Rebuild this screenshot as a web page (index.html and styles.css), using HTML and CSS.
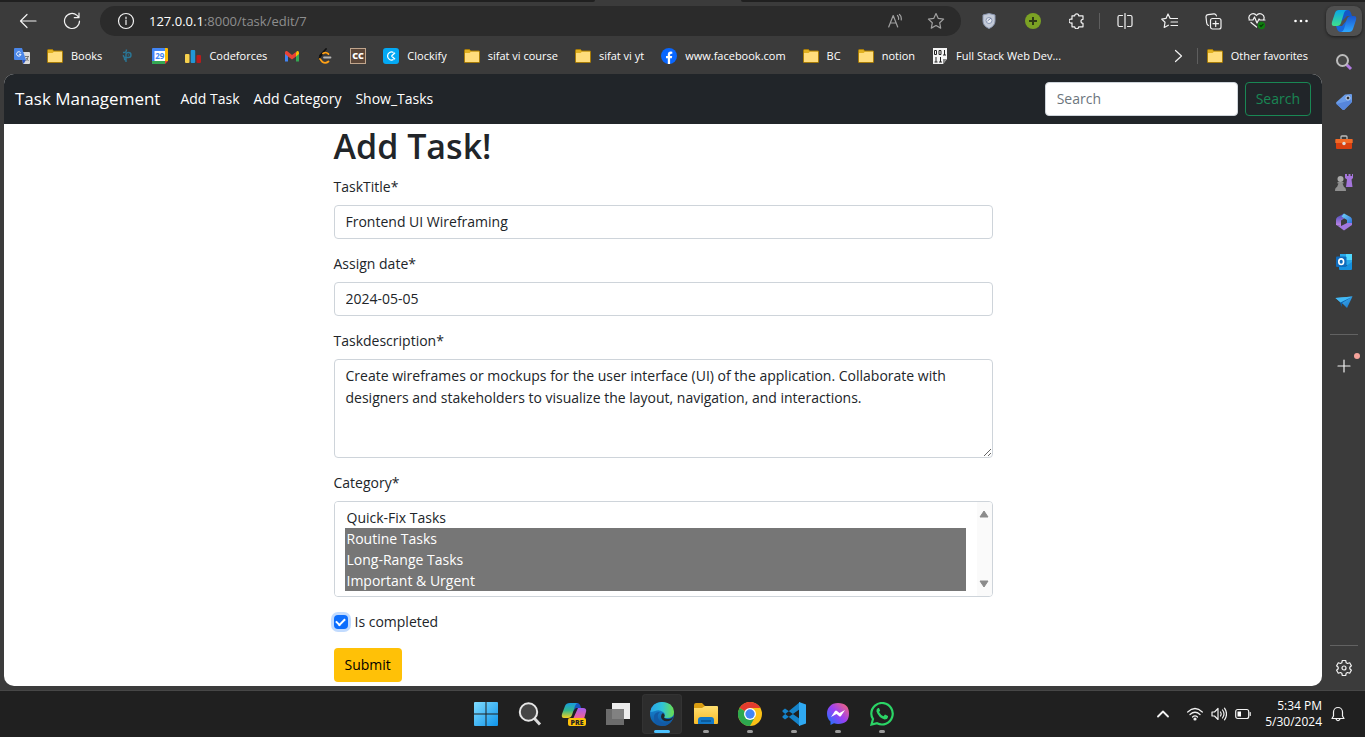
FILE: index.html
```html
<!DOCTYPE html>
<html lang="en">
<head>
<meta charset="utf-8">
<meta name="viewport" content="width=device-width, initial-scale=1">
<title>Edit task</title>
<link rel="stylesheet" href="styles.css">
</head>
<body>
<svg class="defs" width="0" height="0" aria-hidden="true">
  <defs>
    <symbol id="folder" viewBox="0 0 16 16">
      <path d="M.5 2.500q0-1 1-1h4l1.200 1.500h8.300q.5 0 .5.500v10.500q0 .5-.5.500h-14q-.5 0-.5-.5z" fill="#e0b020" stroke="#a87c08"/>
      <path d="M1 5h4.500l1.500-1.200h8v10.200h-14z" fill="#ffdd7c"/>
    </symbol>
    <linearGradient id="cp1" x1="0" y1="0" x2="0" y2="1"><stop offset="0" stop-color="#0aa5e8"/><stop offset="1" stop-color="#3fe08a"/></linearGradient>
    <linearGradient id="cp2" x1="0" y1="0" x2="0" y2="1"><stop offset="0" stop-color="#1a55d0"/><stop offset="1" stop-color="#2da8ff"/></linearGradient>
    <linearGradient id="pr1" x1="0" y1="0" x2="0" y2="1"><stop offset="0" stop-color="#169be0"/><stop offset=".5" stop-color="#35b88a"/><stop offset="1" stop-color="#f5d020"/></linearGradient>
    <linearGradient id="pr2" x1="0" y1="0" x2="0" y2="1"><stop offset="0" stop-color="#a45cf0"/><stop offset="1" stop-color="#f8628c"/></linearGradient>
    <linearGradient id="win" x1="0" y1="0" x2="1" y2="1"><stop offset="0" stop-color="#7fdcff"/><stop offset="1" stop-color="#0f94ea"/></linearGradient>
    <linearGradient id="edge1" x1="0" y1="0" x2="1" y2="0"><stop offset="0" stop-color="#2aa5e8"/><stop offset=".5" stop-color="#2fc3d8"/><stop offset="1" stop-color="#6be04a"/></linearGradient>
    <linearGradient id="edge2" x1="0" y1="0" x2="0" y2="1"><stop offset="0" stop-color="#1b8fdc"/><stop offset="1" stop-color="#0c59a4"/></linearGradient>
    <linearGradient id="msg" x1="0" y1="1" x2="1" y2="0"><stop offset="0" stop-color="#0a7cff"/><stop offset=".5" stop-color="#9a40f5"/><stop offset="1" stop-color="#ff6a6a"/></linearGradient>
    <linearGradient id="tg" x1="0" y1="0" x2="1" y2="1"><stop offset="0" stop-color="#52c4f8"/><stop offset="1" stop-color="#1170c8"/></linearGradient>
    <linearGradient id="m1" x1="0" y1="0" x2="1" y2="1"><stop offset="0" stop-color="#70d8f8"/><stop offset="1" stop-color="#2a68d8"/></linearGradient>
    <linearGradient id="m2" x1="0" y1="0" x2="0" y2="1"><stop offset="0" stop-color="#4248b8"/><stop offset="1" stop-color="#c488e8"/></linearGradient>
    <linearGradient id="fold" x1="0" y1="0" x2="0" y2="1"><stop offset="0" stop-color="#ffdf70"/><stop offset="1" stop-color="#f8ba28"/></linearGradient>
  </defs>
</svg>

<div class="window">
  <div class="browser">
    <div class="tabstrip"><span class="tab-edge tab-edge-left"></span><span class="tab-active"></span><span class="tab-edge tab-edge-right"></span></div>

    <header class="toolbar">
      <button class="nav-btn" aria-label="Back"><svg width="18" height="16" viewBox="0 0 18 16" class="line"><path d="M17 8H1.500M8 1.500 1.500 8 8 14.500"/></svg></button>
      <button class="nav-btn" aria-label="Refresh"><svg width="18" height="18" viewBox="0 0 18 18" class="line"><path d="M16.500 9A7.500 7.500 0 1 1 14 3.400L16 5.500M16 1v4.700h-4.700"/></svg></button>
      <div class="address">
        <svg width="18" height="18" viewBox="0 0 18 18" class="line"><circle cx="9" cy="9" r="7.500"/><path d="M9 8v4.500M9 5v1.400"/></svg>
        <span class="url"><b>127.0.0.1</b>:8000/task/edit/7</span>
        <button class="pill-btn" aria-label="Read aloud"><svg width="16" height="16" viewBox="0 0 16 16" class="line dim"><path d="M.700 14 5.200 2.500 9.700 14M2.500 10h5.500M9.500 2.500q1.500 1.500 1 4M11.500 1.500q2.300 2 1.700 5.500"/></svg></button>
        <button class="pill-btn" aria-label="Add to favorites"><svg width="18" height="18" viewBox="0 0 18 18" class="line dim"><path d="m9 1.500 2.300 4.900 5.300.7-3.900 3.700 1 5.300L9 13.500l-4.700 2.600 1-5.300L1.400 7.100l5.300-.7z"/></svg></button>
      </div>
      <button class="tool" aria-label="Shield"><svg width="14" height="16" viewBox="0 0 14 16"><path d="M7 .500 13 2v6q0 5-6 7.500Q1 13 1 8V2z" fill="#c3cad8" stroke="#8d99b2"/><circle cx="7" cy="7.500" r="3" fill="#e8ebf2" stroke="#8997b4"/><path d="m5.500 8 3.500-3" stroke="#7380a0"/></svg></button>
      <button class="tool" aria-label="Add"><svg width="16" height="16" viewBox="0 0 16 16"><circle cx="8" cy="8" r="8" fill="#7ba224"/><path d="M8 4v8M4 8h8" stroke="#2e3a16" stroke-width="2"/></svg></button>
      <button class="tool" aria-label="Extensions"><svg width="16" height="16" viewBox="0 0 16 16" class="line"><path d="M3 2.800h2.700a2 2 0 0 1 4 0H14v3.500a2 2 0 0 0 0 4v3.500H9.700a2 2 0 0 1-4 0H3v-4a2 2 0 1 1 0-3.500z"/></svg></button>
      <span class="tool-sep"></span>
      <button class="tool" aria-label="Split screen"><svg width="16" height="16" viewBox="0 0 16 16" class="line"><path d="M5.500 2.500H2.500q-1.500 0-1.500 1.500v8q0 1.500 1.500 1.500h3M10.500 2.500h3q1.500 0 1.500 1.500v8q0 1.500-1.500 1.500h-3M8 .500v15"/></svg></button>
      <button class="tool" aria-label="Favorites"><svg width="17" height="16" viewBox="0 0 17 16" class="line"><path d="M11 5.500H9.200L7 1 5 5.400l-4.300.7L4 9.300l-.8 5.200 4.200-2.300M10 5.500h6.500M10 9h6.500M10 12.500h6.500"/></svg></button>
      <button class="tool" aria-label="Collections"><svg width="17" height="17" viewBox="0 0 17 17" class="line"><rect x="5.500" y="5.500" width="10.500" height="10.500" rx="2"/><path d="M10.700 8v5.500M8 10.700h5.500M3.500 12.500Q2 12 1.700 10L1 4Q.800 2 3 1.700l6-.9q2-.2 2.500 2.200"/></svg></button>
      <button class="tool" aria-label="Browser essentials"><svg width="18" height="18" viewBox="0 0 18 18" class="line"><path d="M1.500 8q-2-4 2-6 3-1.200 5 1.500 2-2.700 5-1.500 4 2 2 6M1 8h4l1.500-3L9 11l2-4 1 1h5M3 10.500 8.500 15"/><circle cx="13.500" cy="13.500" r="3.700" fill="#107c10" stroke="none"/><path d="m12 13.500 1 1 2-2.200" stroke="#063c06"/></svg></button>
      <button class="tool" aria-label="Settings and more"><svg width="16" height="4" viewBox="0 0 16 4" fill="#fff"><circle cx="2.500" cy="2" r="1.300"/><circle cx="8" cy="2" r="1.300"/><circle cx="13.500" cy="2" r="1.300"/></svg></button>
    </header>

    <nav class="bookmarks" aria-label="Favorites bar">
      <a href="#" aria-label="Translate"><svg width="16" height="16" viewBox="0 0 16 16"><path d="M7 4h8q1 0 1 1v10q0 1-1 1H9z" fill="#dcdcdc"/><path d="M1 0h7l4 12H1q-1 0-1-1V1q0-1 1-1z" fill="#4a86e8"/><path d="m8 12 4 0-2.500 4z" fill="#2a56c6"/><path d="M6.500 4.500A2.200 2.200 0 1 0 7 6.300H5" fill="none" stroke="#fff"/><path d="M11 8.500h4M11.500 13q2.500-1.500 2.500-4.500M12 10l2.500 3" fill="none" stroke="#777"/></svg></a>
      <a href="#"><svg width="16" height="16"><use href="#folder"/></svg>Books</a>
      <a href="#" aria-label="Programming"><svg width="16" height="16" viewBox="0 0 16 16" fill="none" stroke="#2a7797" stroke-width="1.400"><path d="M7 14V6.500q0-2 2.500-2T12 7t-2.500 2.500H6Q4 9 4.500 7M7 12q-2 0-1.500-2M4 4.500q3.500.5 3.500-3M9.500 6.500v1"/></svg></a>
      <a href="#" aria-label="Calendar"><svg width="16" height="16" viewBox="0 0 16 16"><path d="M0 1q0-1 1-1h12v3H3v13H1q-1 0-1-1z" fill="#4285f4"/><path d="M13 0h2q1 0 1 1v12h-3z" fill="#fbbc04"/><path d="M0 13h13v3H1q-1 0-1-1z" fill="#34a853"/><path d="M13 13h3l-3 3z" fill="#ea4335"/><rect x="2.500" y="3" width="10.500" height="10" fill="#fff"/><text x="7.800" y="11" text-anchor="middle" font-size="8" font-weight="700" fill="#4285f4">29</text></svg></a>
      <a href="#"><svg width="16" height="16" viewBox="0 0 16 16"><rect y="6" width="4.500" height="9" rx="1" fill="#f6d04d"/><rect x="5.700" y="2" width="4.500" height="13" rx="1" fill="#2196d6"/><rect x="11.500" y="7" width="4.500" height="8" rx="1" fill="#b71c1c"/></svg>Codeforces</a>
      <a href="#" aria-label="Gmail"><svg width="16" height="16" viewBox="0 0 16 16"><path d="M1 4v9.500h3V7z" fill="#4285f4"/><path d="M15 4v9.500h-3V7z" fill="#34a853"/><path d="M12 4.500 13 3q2-.5 2 1.500v1.500l-3 2.500z" fill="#fbbc04"/><path d="M1 6V4.500Q1 2.500 3 3l5 4 4-3v4.500l-4 3-4-3z" fill="#ea4335"/></svg></a>
      <a href="#" aria-label="LeetCode"><svg width="16" height="16" viewBox="0 0 16 16" fill="none" stroke-width="1.800" stroke-linecap="round"><path d="M9 1 3 7.500" stroke="#111"/><path d="M11.500 6Q8.500 3.500 6 5.500L3 8.500q-1 1.500 0 3" stroke="#111"/><path d="m3 11 2.500 3q3 2 6-.5" stroke="#ffa116"/><path d="M6 5.500q3-2 5.500.5" stroke="#ffa116"/><path d="M7 9.500h6.500" stroke="#b3b3b3"/></svg></a>
      <a href="#" aria-label="CodeChef"><svg width="16" height="16" viewBox="0 0 16 16"><rect x=".500" y=".500" width="15" height="15" fill="#5b4638" stroke="#c0a58c"/><text x="8" y="11" text-anchor="middle" font-size="9" font-weight="800" fill="#fff">CC</text></svg></a>
      <a href="#"><svg width="16" height="16" viewBox="0 0 16 16"><rect width="16" height="16" rx="3" fill="#03a9f4"/><path d="M10.500 4.500A4 4 0 1 0 10.500 11.500M8.500 8 12 4.700M8.500 8l3.500 3.300" fill="none" stroke="#fff" stroke-width="1.300"/></svg>Clockify</a>
      <a href="#"><svg width="16" height="16"><use href="#folder"/></svg>sifat vi course</a>
      <a href="#"><svg width="16" height="16"><use href="#folder"/></svg>sifat vi yt</a>
      <a href="#"><svg width="16" height="16" viewBox="0 0 16 16"><circle cx="8" cy="8" r="8" fill="#0866ff"/><path d="M6.800 16V10.300H5V8h1.800V6.500q0-3 3-3 1 0 1.500.2v2h-1q-1.200 0-1.200 1.200V8h2.100l-.4 2.300H9.100V16z" fill="#fff"/></svg>www.facebook.com</a>
      <a href="#"><svg width="16" height="16"><use href="#folder"/></svg>BC</a>
      <a href="#"><svg width="16" height="16"><use href="#folder"/></svg>notion</a>
      <a href="#"><svg width="16" height="16" viewBox="0 0 16 16"><path d="M1 0h14v11l-4 5H1z" fill="#f4f4f4"/><path d="M15 11h-4v5z" fill="#888"/><path d="M2.500 2.500h2v4h-2zM7 2.500h2v4H7zM12.500 2v5M11 7h3M4 9v5M2.500 14h3M8.500 9v5M7 14h3" fill="none" stroke="#222"/></svg>Full Stack Web Dev...</a>
      <button class="overflow" aria-label="More favorites"><svg width="10" height="14" viewBox="0 0 10 14" class="line"><path d="m1.500 1.500 6 5.500-6 5.500"/></svg></button>
      <a href="#" class="other"><svg width="16" height="16"><use href="#folder"/></svg>Other favorites</a>
    </nav>

    <div class="page">
      <nav class="navbar">
        <a href="#" class="brand">Task Management</a>
        <a href="#" class="nav-link">Add Task</a>
        <a href="#" class="nav-link">Add Category</a>
        <a href="#" class="nav-link">Show_Tasks</a>
        <form class="search" role="search">
          <input class="control" type="search" placeholder="Search" aria-label="Search">
          <button class="btn btn-outline" type="button">Search</button>
        </form>
      </nav>
      <main class="content">
        <h1>Add Task!</h1>
        <form>
          <div class="field"><label for="title">TaskTitle*</label><input class="control" id="title" type="text" value="Frontend UI Wireframing"></div>
          <div class="field"><label for="date">Assign date*</label><input class="control" id="date" type="text" value="2024-05-05"></div>
          <div class="field"><label for="desc">Taskdescription*</label><textarea class="control area" id="desc">Create wireframes or mockups for the user interface (UI) of the application. Collaborate with designers and stakeholders to visualize the layout, navigation, and interactions.</textarea></div>
          <div class="field"><label for="cat">Category*</label>
            <div class="listbox">
              <select id="cat" multiple size="4">
                <option>Quick-Fix Tasks</option>
                <option selected>Routine Tasks</option>
                <option selected>Long-Range Tasks</option>
                <option selected>Important &amp; Urgent</option>
              </select>
              <div class="rail" aria-hidden="true">
                <svg width="10" height="8" viewBox="0 0 10 8"><path d="M5 1 9 7H1z" fill="#8b8b8b" stroke="#8b8b8b" stroke-linejoin="round"/></svg>
                <svg width="10" height="8" viewBox="0 0 10 8"><path d="M5 7 9 1H1z" fill="#8b8b8b" stroke="#8b8b8b" stroke-linejoin="round"/></svg>
              </div>
            </div>
          </div>
          <div class="check"><input type="checkbox" id="done" checked><label for="done">Is completed</label></div>
          <button class="btn btn-submit" type="button">Submit</button>
        </form>
      </main>
    </div>
  </div>

  <aside class="sidebar">
    <button class="copilot" aria-label="Copilot"><svg width="26" height="24" viewBox="0 0 26 24"><path d="M9 1h8q2 0 3 3l1 3h-5l-5 5z" fill="#1457c8"/><path d="M17 23H9q-2 0-3-3l-1-3h6l5-6z" fill="#1668dd"/><path d="M8 1h8q-2 0-3 3l-3 10q-1 3-4 3H3q-3 0-2-4L4 4q1-3 4-3z" fill="url(#cp1)"/><path d="M18 23h-8q2 0 3-3l3-10q1-3 4-3h3q3 0 2 4l-3 9q-1 3-4 3z" fill="url(#cp2)"/></svg></button>
    <button class="side" aria-label="Search"><svg width="18" height="18" viewBox="0 0 18 18" fill="none"><path d="m11 11 5 5" stroke="#b07be0" stroke-width="3"/><circle cx="7.500" cy="7.500" r="5.500" stroke="#bcbcbc" stroke-width="2" fill="#464646"/></svg></button>
    <button class="side" aria-label="Shopping"><svg width="18" height="18" viewBox="0 0 18 18"><path d="M10 1.500 16 1q1 0 1 1v7l-7.500 7.500q-1 1-2 0L1.500 11q-1-1 0-2z" fill="#6a9ce8"/><path d="m1.500 11 15-4v2.500l-7 7q-1 1-2 0z" fill="#5686dc"/><circle cx="13" cy="5" r="2" fill="#333" stroke="#c5d9fa"/></svg></button>
    <button class="side" aria-label="Tools"><svg width="18" height="18" viewBox="0 0 18 18"><path d="M6 6V4q0-1 1-1h4q1 0 1 1v2" fill="none" stroke="#bbb" stroke-width="1.300"/><path d="M1 6h16q.7 0 .7.700V10H.300V6.700Q.300 6 1 6z" fill="#f26a26"/><path d="M1 10h16v5q0 1-1 1H2q-1 0-1-1z" fill="#d94010"/><circle cx="9" cy="10.500" r="1.700" fill="#ddd"/></svg></button>
    <button class="side" aria-label="Games"><svg width="18" height="18" viewBox="0 0 18 18"><path d="M10 1h2v2h1.500V1h2v2H17V1h1v4l-1.500 1.500L17.500 14H11l1-7.500L10 5z" fill="#a575dc"/><circle cx="5.500" cy="6" r="3" fill="#aaa"/><path d="M2.500 9h6v1.500H7.500L9 14q2 .5 2 4H0q0-3.500 2-4l1.500-3.500h-1z" fill="#8f8f8f"/></svg></button>
    <button class="side" aria-label="Microsoft 365"><svg width="18" height="18" viewBox="0 0 18 18"><path d="M9 .500 2.500 4Q1 5 1 7v5l5 1V7.500L11.500 4z" fill="url(#m2)"/><path d="m9 .500 6.500 3.500Q17 5 17 7v5l-5-2V7L6.500 3.500z" fill="url(#m1)"/><path d="M1.500 12 6 13l6-3h5v2L9 17.500z" fill="#a178e0"/></svg></button>
    <button class="side" aria-label="Outlook"><svg width="18" height="18" viewBox="0 0 18 18"><rect x="5" y="1" width="12" height="11" fill="#28a8ea"/><path d="M11 1h6v6h-6z" fill="#50d9ff"/><path d="M4 9 11 13l6-4v7q0 1-1 1H5q-1 0-1-1z" fill="#1490df"/><rect x="1" y="3.500" width="10.500" height="10.500" rx="1" fill="#0f6cbd"/><ellipse cx="6.200" cy="8.700" rx="2.400" ry="2.800" fill="none" stroke="#fff" stroke-width="1.600"/></svg></button>
    <button class="side" aria-label="Drop"><svg width="18" height="18" viewBox="0 0 18 18"><path d="M.500 5 17.500 3.500 12 15 8 11z" fill="url(#tg)"/><path d="M17.500 3.500 7 10l-.5 4L5 9z" fill="#0a5fb0"/><path d="M.500 5 17.500 3.500 5.500 9.500z" fill="#42b9f5"/></svg></button>
    <span class="side-sep"></span>
    <button class="side side-add" aria-label="Customize"><svg width="14" height="14" viewBox="0 0 14 14" class="line"><path d="M7 1v12M1 7h12"/></svg><span class="dot"></span></button>
    <span class="side-sep side-end"></span>
    <button class="side settings" aria-label="Settings"><svg width="18" height="18" viewBox="0 0 18 18" class="line"><path d="M7.300 1.500h3.400l.5 2.300 1.300.7 2.200-.7 1.700 2.900-1.600 1.500v1.600l1.600 1.500-1.700 2.900-2.200-.7-1.300.7-.5 2.300H7.300l-.5-2.300-1.300-.7-2.200.7-1.700-2.900 1.600-1.500V8.200L1.600 6.700l1.700-2.900 2.200.7 1.300-.7z"/><circle cx="9" cy="9" r="2"/></svg></button>
  </aside>
</div>

<footer class="taskbar">
  <div class="apps">
    <button class="app" aria-label="Start"><svg width="24" height="24" viewBox="0 0 24 24" fill="url(#win)"><path d="M1 0h10.500v11.500H0V1q0-1 1-1zM12.500 0H23q1 0 1 1v10.500H12.500zM0 12.500h11.500V24H1q-1 0-1-1zM12.500 12.500H24V23q0 1-1 1H12.500z"/></svg></button>
    <button class="app" aria-label="Search"><svg width="24" height="24" viewBox="0 0 24 24"><path d="m16 16 6 6.500" stroke="#d9d9d9" stroke-width="3"/><circle cx="10.500" cy="10" r="8.700" fill="#454545" stroke="#e6e6e6" stroke-width="2"/></svg></button>
    <button class="app" aria-label="Copilot preview"><svg width="26" height="26" viewBox="0 0 26 26"><path d="M9 2h7q3 0 4 5h-5l-5 5z" fill="#1756c0"/><path d="M9 2h8q-2 0-3 3l-3 9q-1 3-4 3H3q-3 0-2-4l3-8q1-3 5-3z" fill="url(#pr1)"/><path d="M17 7h5q4 0 3 4l-2 7H12z" fill="url(#pr2)"/><rect x="7" y="17" width="18" height="8" rx="2" fill="#ffc20a"/><text x="16" y="24" text-anchor="middle" font-size="7" font-weight="800" fill="#222">PRE</text></svg></button>
    <button class="app" aria-label="Task view"><svg width="24" height="24" viewBox="0 0 24 24"><rect x="6" y="1" width="18" height="16" fill="#ededed"/><rect y="7" width="18" height="16" fill="#747474" fill-opacity=".9"/></svg></button>
    <button class="app active" aria-label="Edge"><svg width="24" height="24" viewBox="0 0 24 24"><circle cx="12" cy="12" r="12" fill="url(#edge2)"/><path d="M.300 10Q2 0 12 0q11 0 12 10 0 6-7 6-4 0-3-2 2-2-1-4-4-3-8-1-3 1-4.700 1z" fill="url(#edge1)"/><path d="M10 10q-3 2-2 6 2 5 8 5 3 0 6-3-3 6-10 6Q3 22 4 14q1-4 6-4z" fill="#135aa5"/><path d="M13 11q3 3 1 4 0 2 5 2 3-.5 4.500-2.500-1 3.500-4.500 4.500-7 1-8-4 0-3 2-4z" fill="#22262b"/></svg></button>
    <button class="app running" aria-label="File Explorer"><svg width="24" height="24" viewBox="0 0 24 24"><path d="M0 3q0-2 2-2h6l3 3h12v6H0z" fill="#d99c10"/><path d="M0 6h8l3-2h12q1 0 1 1v16q0 1-1 1H1q-1 0-1-1z" fill="url(#fold)"/><path d="M4 22v-4q0-3 3-3h10q3 0 3 3v4z" fill="#1279c9"/><path d="M7 19h10" stroke="#0a538f" stroke-width="1.500"/></svg></button>
    <button class="app running" aria-label="Chrome"><svg width="24" height="24" viewBox="0 0 24 24"><circle cx="12" cy="12" r="12" fill="#fbc116"/><path d="M12 12 1.600 6A12 12 0 0 1 22.400 6H12z" fill="#e33b2e"/><path d="M1.600 6A12 12 0 0 0 12 24l5-9-5-3z" fill="#2da94f"/><circle cx="12" cy="12" r="6" fill="#fff"/><circle cx="12" cy="12" r="4.700" fill="#4285f4"/></svg></button>
    <button class="app running" aria-label="Visual Studio Code"><svg width="24" height="24" viewBox="0 0 24 24"><path d="M.500 8.500 3 6.500l15 10.500v7L.500 9.700zM.500 15.500 3 17.500 18 7V0L.500 14.300z" fill="#1583c9"/><path d="m17 0 7 2.500v19L17 24z" fill="#2fa9f2"/></svg></button>
    <button class="app running" aria-label="Messenger"><svg width="24" height="24" viewBox="0 0 24 24"><path d="M12 1C5 1 1 6 1 11.500q0 5 3.500 8V23L8 21.300q2 .700 4 .700 11 0 11-10.500T12 1z" fill="url(#msg)"/><path d="m5 15 4-6q1-1 2 0l2.500 2L19 8l-4 6q-1 1-2 0l-2.500-2z" fill="#fff"/></svg></button>
    <button class="app running" aria-label="WhatsApp"><svg width="24" height="24" viewBox="0 0 24 24" fill="none"><path d="M1.500 22.500 3 17Q1.300 14.500 1.300 11.800A10.700 10.700 0 1 1 7 21.200z" stroke="#2bd566" stroke-width="2.200"/><path d="M8 6q-2 1-1.500 3.500 2 6 8 8 3 0 3.500-2.500v-1l-3-1.500-1.500 1.700Q10.500 13 9 10l1.200-1.300L9 6z" fill="#2bd566"/></svg></button>
  </div>
  <div class="tray">
    <button class="tray-btn" aria-label="Hidden icons"><svg width="12" height="8" viewBox="0 0 12 8" class="line bold"><path d="m1 6.500 5-5 5 5"/></svg></button>
    <button class="tray-group" aria-label="Network, volume, battery">
      <svg width="16" height="14" viewBox="0 0 16 14" class="line"><path d="M.700 5q7.300-7 14.600 0M3 7.500q5-4.500 10 0M5.500 10q2.500-2.300 5 0"/><circle cx="8" cy="12" r="1" fill="#fff"/></svg>
      <svg width="16" height="14" viewBox="0 0 16 14" class="line"><path d="M1 5h2.500L7 1.500v11L3.500 9H1zM9.500 5q1.300 2 0 4M11.500 3q3 4 0 8M13.500 1.200q4 5.800 0 11.600"/></svg>
      <svg width="16" height="12" viewBox="0 0 16 12" class="line"><rect x=".700" y="1.500" width="13" height="9" rx="2"/><path d="M15.200 4.500v3"/><path d="M2.500 3.500H6v5H2.500z" fill="#fff" stroke="none"/></svg>
    </button>
    <div class="clock"><time>5:34 PM</time><time>5/30/2024</time></div>
    <button class="bell" aria-label="Notifications"><svg width="14" height="16" viewBox="0 0 14 16" class="line"><path d="M1 12.500 2.500 10V6a4.500 4.500 0 0 1 9 0v4l1.500 2.500zM5 13q2 3.500 4 0"/></svg></button>
  </div>
</footer>
</body>
</html>
```
FILE: styles.css
```css
* { box-sizing: border-box; }

body {
  margin: 0;
  min-height: 100vh;
  display: flex;
  flex-direction: column;
  background: #3b3b3b;
  color: #212529;
  font-family: "Open Sans", "Noto Sans", sans-serif;
  font-size: 14px;
  line-height: 22px;
}

a { color: inherit; text-decoration: none; }
button { border: 0; padding: 0; background: none; color: inherit; font: inherit; }
input, textarea, select { font: inherit; color: inherit; margin: 0; }
svg { display: block; flex: none; }
.defs { position: absolute; }
.line { fill: none; stroke: #f2f2f2; stroke-width: 1.2; stroke-linecap: round; stroke-linejoin: round; }
.dim { stroke: #a0a0a0; }
.bold { stroke-width: 1.8; }

.window { flex: 1; display: flex; }
.browser { flex: 1; min-width: 0; display: flex; flex-direction: column; padding-bottom: 4px; }

.tabstrip { display: flex; height: 2px; }
.tab-edge { background: #202020; }
.tab-edge-left { flex: 595; border-bottom-right-radius: 2px; }
.tab-active { flex: 146; }
.tab-edge-right { flex: 581; border-bottom-left-radius: 2px; }

.toolbar { display: flex; align-items: center; height: 38px; margin-right: -1px; padding-left: 6px; }
.nav-btn { width: 44px; height: 30px; display: grid; place-items: center; }
.address {
  flex: 1;
  display: flex;
  align-items: center;
  height: 30px;
  margin: 0 6px;
  padding: 0 5px 0 17px;
  border-radius: 15px;
  background: #2b2b2b;
}
.url { flex: 1; margin-left: 14px; color: #8e8e8e; font-size: 13px; }
.url b { color: #fff; font-weight: 400; }
.pill-btn { width: 40px; display: grid; place-items: center; }
.tool { width: 44px; height: 30px; display: grid; place-items: center; }
.tool-sep { width: 4px; height: 16px; border-left: 1px solid #5e5e5e; }

.bookmarks {
  display: flex;
  align-items: center;
  gap: 17px;
  height: 34px;
  padding: 0 14px 2px;
  color: #fff;
  font-size: 11px;
  line-height: 16px;
  white-space: nowrap;
}
.bookmarks a { display: flex; align-items: center; gap: 8px; }
.overflow { margin-left: auto; }
.bookmarks .other { position: relative; padding-left: 6px; }
.bookmarks .other::before { content: ""; position: absolute; left: -4px; height: 16px; border-left: 1px solid #5e5e5e; }

.page {
  flex: 1;
  margin-left: 4px;
  border-radius: 10px;
  overflow: hidden;
  background: #fff;
}
.navbar {
  display: flex;
  align-items: center;
  gap: 14px;
  height: 50px;
  padding: 0 11px;
  background: #212529;
  color: #fff;
}
.brand { margin-right: 6px; font-size: 17px; }
.search { margin-left: auto; display: flex; gap: 7px; }
.search .control { width: 193px; }
.control {
  display: block;
  width: 100%;
  height: 34px;
  padding: 4px 11px 6px;
  border: 1px solid #ced4da;
  border-radius: 4px;
  background: #fff;
  color: #212529;
}
.control::placeholder { color: #6c757d; }
.btn { height: 34px; padding: 0 10px; border: 1px solid transparent; border-radius: 4px; }
.btn-outline { border-color: #198754; color: #198754; }
.btn-submit { background: #ffc107; color: #000; }

.content { width: 50%; margin: 0 auto; }
h1 { margin: 0; padding: 1px 0 8px; font-size: 34px; font-weight: 600; line-height: 43px; }
.field { margin-bottom: 14px; }
.field label { display: block; margin-bottom: 7px; }
.area { height: 99px; padding: 5px 11px; resize: vertical; }
.listbox { display: flex; border: 1px solid #ced4da; border-radius: 4px; overflow: hidden; }
.listbox select {
  flex: 1;
  min-width: 0;
  height: 94px;
  padding: 5px 11px 5px 10px;
  border: 0;
  outline: 0;
  background: #fff;
  scrollbar-width: none;
}
.listbox option { height: 21px; min-height: 21px; padding: 1px 2px 0; line-height: 20px; }
.listbox option:checked { background: #767676 linear-gradient(#767676, #767676); color: #fff; }
.rail {
  width: 15px;
  display: flex;
  flex-direction: column;
  align-items: center;
  justify-content: space-between;
  padding: 8px 0;
  background: #fafafa;
}
.check { display: flex; align-items: center; gap: 7px; margin-bottom: 15px; }
.check input {
  appearance: none;
  display: grid;
  place-items: center;
  width: 14px;
  height: 14px;
  border-radius: 4px;
  background: #0d6efd;
  box-shadow: 0 0 0 3px #c2dbfe;
}
.check input:checked::before {
  content: "";
  width: 7px;
  height: 4px;
  margin-bottom: 2px;
  border: solid #fff;
  border-width: 0 0 2px 2px;
  transform: rotate(-45deg);
}

.sidebar {
  width: 43px;
  display: flex;
  flex-direction: column;
  align-items: center;
  border-top: 2px solid #202020;
  padding: 4px 0 2px;
}
.copilot {
  width: 36px;
  height: 30px;
  margin-bottom: 6px;
  display: grid;
  place-items: center;
  border-radius: 8px;
  background: #505050;
  box-shadow: 0 1px 3px #1c1c1c;
}
.side { position: relative; width: 40px; height: 40px; display: grid; place-items: center; }
.side-sep { width: 28px; height: 1px; margin: 12px 0; background: #626262; }
.side-add { margin-top: -1px; }
.dot { position: absolute; top: 7px; right: 4px; width: 6px; height: 6px; border-radius: 50%; background: #f5a39b; }
.side-end { margin: auto 0 2px; }

.taskbar {
  display: grid;
  grid-template-columns: 1fr auto 1fr;
  align-items: center;
  height: 47px;
  padding-left: 2px;
  border-top: 1px solid #474747;
  background: #202020;
  color: #fff;
}
.apps { grid-column: 2; display: flex; gap: 4px; }
.app { position: relative; width: 40px; height: 40px; display: grid; place-items: center; border-radius: 4px; }
.active { background: #2d2d2d; box-shadow: inset 0 0 0 1px #333; }
.running::after, .active::after {
  content: "";
  position: absolute;
  bottom: 1px;
  left: 17px;
  width: 6px;
  height: 3px;
  border-radius: 2px;
  background: #9a9a9a;
}
.active::after { left: 12px; width: 16px; background: #4cc2ff; }
.tray { display: flex; align-items: center; justify-content: flex-end; padding-right: 20px; }
.tray-btn { margin-right: 18px; }
.tray-group { display: flex; align-items: center; gap: 8px; margin-right: 14px; }
.clock { display: flex; flex-direction: column; align-items: flex-end; font-size: 12px; line-height: 16px; }
.bell { margin-left: 9px; }
```
